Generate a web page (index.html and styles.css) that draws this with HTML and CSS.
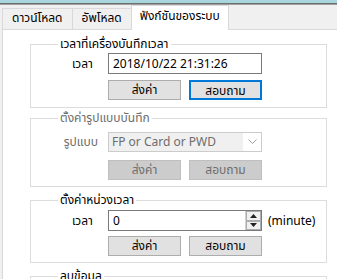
FILE: index.html
```html
<!DOCTYPE html>
<html lang="th">
<head>
  <meta charset="UTF-8">
  <title>ฟังก์ชันของระบบ</title>
  <link rel="stylesheet" href="styles.css">
</head>
<body>
  <div class="topband"></div>
  <div class="topline"></div>

  <div class="tabs">
    <div class="tab">ดาวน์โหลด</div>
    <div class="tab">อัพโหลด</div>
    <div class="tab active">ฟังก์ชันของระบบ</div>
  </div>

  <div class="panel">
    <fieldset class="group clock">
      <legend>เวลาที่เครื่องบันทึกเวลา</legend>
      <div class="row">
        <span class="label">เวลา</span>
        <div class="field">2018/10/22 21:31:26</div>
      </div>
      <div class="buttons">
        <button>ส่งค่า</button>
        <button class="focus">สอบถาม</button>
      </div>
    </fieldset>

    <fieldset class="group off">
      <legend>ตั้งค่ารูปแบบบันทึก</legend>
      <div class="row">
        <span class="label wide">รูปแบบ</span>
        <div class="combo">
          <span class="combo-text">FP or Card or PWD</span>
          <span class="combo-arrow">
            <svg width="9" height="5" viewBox="0 0 9 5"><path d="M0.5 0.5 L4.5 4.5 L8.5 0.5" fill="none" stroke="#a0a0a0" stroke-width="1"/></svg>
          </span>
        </div>
      </div>
      <div class="buttons">
        <button disabled>ส่งค่า</button>
        <button disabled>สอบถาม</button>
      </div>
    </fieldset>

    <fieldset class="group delay">
      <legend>ตั้งค่าหน่วงเวลา</legend>
      <div class="row">
        <span class="label">เวลา</span>
        <div class="field spin">
          <span>0</span>
          <span class="spin-btns">
            <span class="up"><svg width="7" height="4" viewBox="0 0 7 4"><path d="M0 4 L3.5 0 L7 4 Z" fill="#222"/></svg></span>
            <span class="down"><svg width="7" height="4" viewBox="0 0 7 4"><path d="M0 0 L3.5 4 L7 0 Z" fill="#222"/></svg></span>
          </span>
        </div>
        <span class="unit">(minute)</span>
      </div>
      <div class="buttons">
        <button>ส่งค่า</button>
        <button>สอบถาม</button>
      </div>
    </fieldset>

    <fieldset class="group erase">
      <legend>ลบข้อมูล</legend>
      <div class="row"></div>
    </fieldset>
  </div>
</body>
</html>
```

FILE: styles.css
```css
* { box-sizing: border-box; margin: 0; padding: 0; }
html, body { overflow: hidden; }
body {
  font-family: "Noto Sans Thai", Tahoma, "Noto Sans", "DejaVu Sans", sans-serif;
  font-size: 12px;
  color: #000;
  background: #f0f0f0;
  width: 337px;
  height: 279px;
}
.topband { height: 3px; background: #a9d6dc; }
.topline { height: 2px; background: #6e6e6e; border-bottom: 1px solid #a0a0a0; }

.tabs {
  display: flex; align-items: flex-end;
  height: 24px; padding-left: 2px;
  position: relative; z-index: 1;
}
.tab {
  height: 21px; padding: 0 9px;
  line-height: 19px;
  border: 1px solid #d9d9d9; border-bottom: none;
  background: #f0f0f0;
  margin-right: -1px;
  white-space: nowrap;
}
.tab.active {
  height: 25px; margin-bottom: -1px;
  background: #fff;
  padding: 0 8px;
  line-height: 20px;
}

.panel {
  background: #fff;
  margin-left: 2px;
  border-left: 1px solid #d9d9d9;
  border-top: 1px solid #d9d9d9;
  padding: 7px 0 0 27px;
  height: 250px;
  overflow: hidden;
}

.group {
  width: 297px;
  border: 1px solid #dcdcdc;
  padding: 0 0 6px 21px;
}
.group legend {
  line-height: 14px;
  padding: 0 2px;
  margin-left: 6px;
}
.clock { padding-bottom: 7px; }
.clock .row { margin-top: 2px; }
.off { margin-top: 3px; }
.off .row { margin-top: 6px; }
.off .buttons { margin-top: 8px; }
.delay { margin-top: 6px; }
.delay .row { margin-top: 3px; }
.delay .buttons { margin-top: 5px; }
.erase { margin-top: 6px; height: 40px; }

.row { display: flex; align-items: center; height: 21px; }
.label {
  flex: none; width: 56px;
  text-align: right;
  padding-right: 15px;
}
.label.wide { padding-right: 10px; }
.field {
  width: 154px; height: 21px;
  border: 1px solid #7a7a7a;
  padding: 0 4px;
  line-height: 19px;
  font-family: "Noto Sans", "Noto Sans Thai", sans-serif;
}
.buttons { display: flex; gap: 8px; margin: 6px 0 0 56px; }
button {
  width: 73px; height: 20px;
  font: inherit;
  background: #e1e1e1;
  border: 1px solid #adadad;
  color: #000;
}
button.focus { border: 2px solid #0078d7; }

.off legend, .off .label { color: #6d6d6d; }
.combo {
  width: 154px; height: 20px;
  border: 1px solid #cccccc;
  display: flex;
}
.combo-text {
  flex: 1; background: #f0f0f0; color: #6d6d6d;
  padding: 0 3px; line-height: 18px;
  font-family: "Noto Sans", sans-serif;
}
.combo-arrow {
  width: 18px; display: flex; align-items: center; justify-content: center;
  background: #fff;
}
button:disabled {
  background: #cccccc; border-color: #bfbfbf; color: #6d6d6d;
}

.spin { display: flex; justify-content: space-between; padding-right: 0; }
.spin-btns {
  width: 16px; display: flex; flex-direction: column;
  border-left: 1px solid #d0d0d0;
}
.spin-btns span {
  flex: 1; display: flex; align-items: center; justify-content: center;
  background: #f0f0f0; border: 1px solid #adadad;
}
.unit { margin-left: 6px; font-family: "Noto Sans", sans-serif; }
```
